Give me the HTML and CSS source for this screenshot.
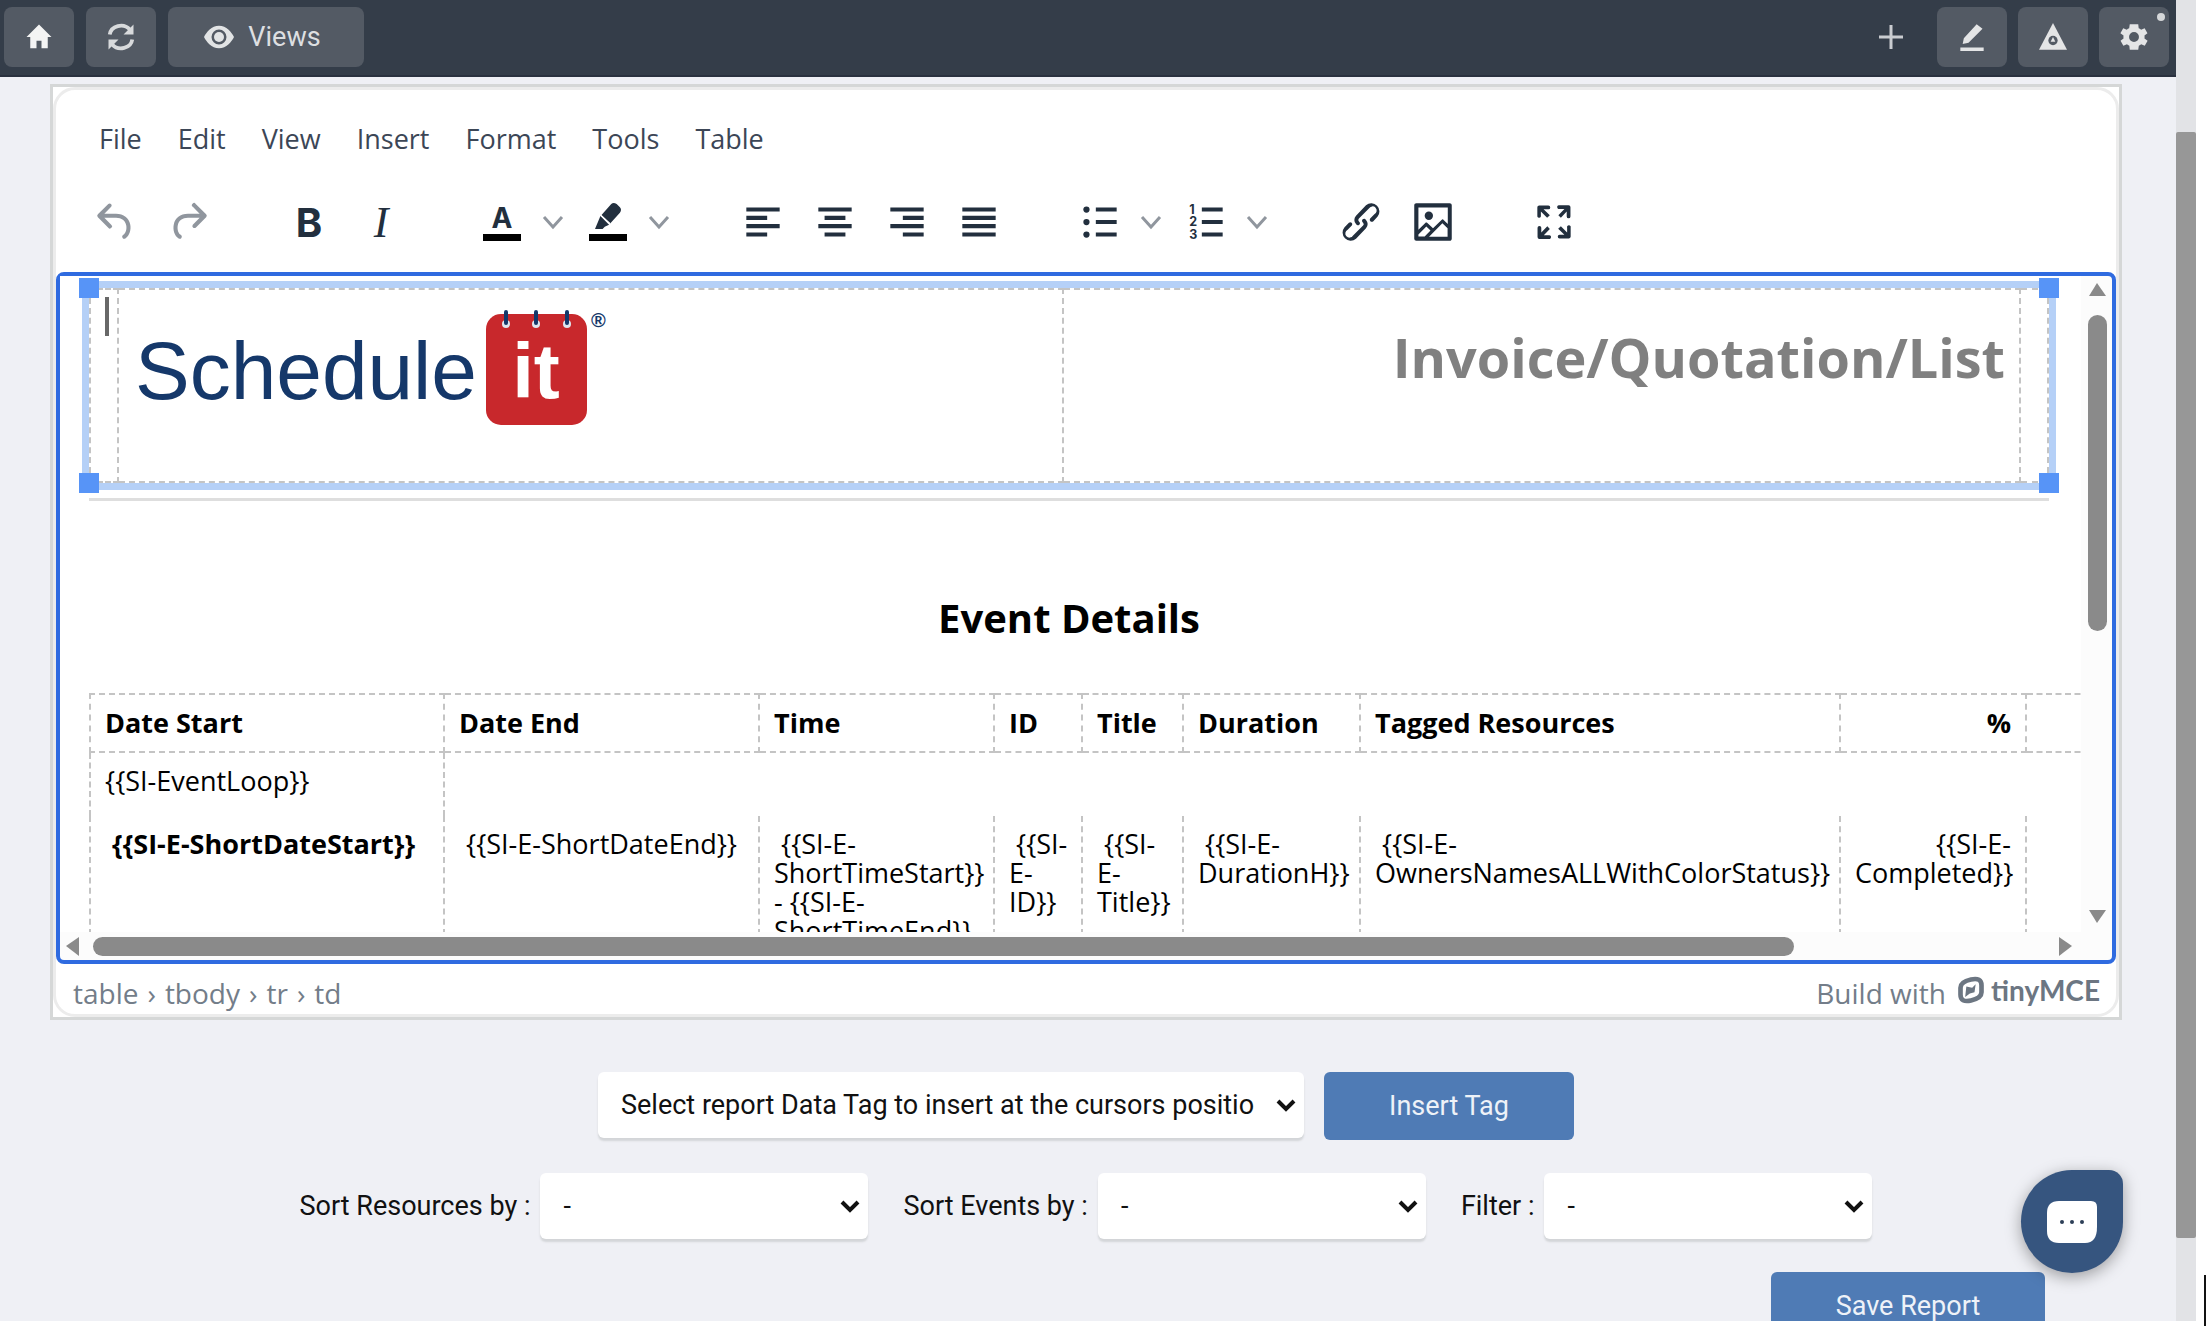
FILE: index.html
```html
<!DOCTYPE html>
<html lang="en">

<head>
    <meta charset="UTF-8">
    <meta name="viewport" content="width=device-width, initial-scale=1.0">
    <title>Report Editor</title>
    <link rel="stylesheet" href="styles.css">
</head>

<body>
    <div class="app">
        <header class="topbar">
            <button type="button" class="top-btn" aria-label="Home">
                <svg width="30" height="30" viewBox="0 0 24 24" fill="#f4f4f4"><path d="M12 2 2 12h3v9h5v-6h4v6h5v-9h3z"/></svg>
            </button>
            <button type="button" class="top-btn" aria-label="Refresh">
                <svg width="30" height="30" viewBox="0 0 24 24" fill="none" stroke="#d8dadc" stroke-width="3"><path d="M3 10a9 8 0 0 1 16-4M21 14a9 8 0 0 1-16 4"/><path d="M22 2v8h-8zM2 22v-8h8z" fill="#d8dadc" stroke="none"/></svg>
            </button>
            <button type="button" class="top-btn views-btn">
                <svg width="30" height="30" viewBox="0 0 24 24" fill="#e2e4e5"><path d="M12 3C6 3 2 8 0 12c2 4 6 9 12 9s10-5 12-9c-2-4-6-9-12-9zm0 15a6 6 0 1 1 0-12 6 6 0 0 1 0 12z"/><circle cx="12" cy="12" r="4"/></svg>
                Views
            </button>
            <div class="topbar-right">
                <button type="button" class="plus-btn" aria-label="Add">
                    <svg width="24" height="24" viewBox="0 0 24 24" stroke="#c9ccd0" stroke-width="3"><path d="M12 0v24M0 12h24"/></svg>
                </button>
                <button type="button" class="top-btn" aria-label="Edit">
                    <svg width="28" height="28" viewBox="0 0 24 24" fill="#e4e5e6"><path d="M2 21h20v3H2zM4 18l1-5L16 1l5 4L9 17z"/></svg>
                </button>
                <button type="button" class="top-btn" aria-label="Alerts">
                    <svg width="28" height="28" viewBox="0 0 24 24" fill="#e4e5e6"><path d="M12 0 24 23H0z"/><circle cx="12" cy="15" r="4" fill="#535a64"/><path d="m12 12 2 4h-4z"/></svg>
                </button>
                <button type="button" class="top-btn" aria-label="Settings">
                    <svg width="34" height="34" viewBox="0 0 24 24" fill="#e4e5e6"><path d="M19.4 13a7 7 0 0 0 0-2l2.100-1.600-2-3.500-2.500 1a7 7 0 0 0-1.700-1L15 3h-6l-.4 2.900a7 7 0 0 0-1.700 1l-2.500-1-2 3.500L4.600 11a7 7 0 0 0 0 2l-2.100 1.600 2 3.500 2.500-1a7 7 0 0 0 1.700 1L9 21h6l.4-2.900a7 7 0 0 0 1.700-1l2.500 1 2-3.500zM12 15.500a3.500 3.500 0 1 1 0-7 3.500 3.500 0 0 1 0 7z"/></svg>
                    <span class="dot"></span>
                </button>
            </div>
        </header>

        <main>
            <div class="editor-frame">
                <div class="editor">
                    <nav class="menubar">
                        <button type="button">File</button>
                        <button type="button">Edit</button>
                        <button type="button">View</button>
                        <button type="button">Insert</button>
                        <button type="button">Format</button>
                        <button type="button">Tools</button>
                        <button type="button">Table</button>
                    </nav>

                    <div class="toolbar">
                        <div class="group muted">
                            <button type="button" aria-label="Undo"><svg viewBox="0 0 24 24"><path d="M6.400 8H12c3.700 0 6.200 2 6.800 5.100.6 2.700-.4 5.600-2.300 6.800a1 1 0 0 1-1-1.800c1.100-.6 1.800-2.700 1.400-4.600-.5-2.100-2.100-3.500-4.900-3.500H6.400l3.300 3.300a1 1 0 1 1-1.400 1.400l-5-5a1 1 0 0 1 0-1.400l5-5a1 1 0 0 1 1.400 1.400z"/></svg></button>
                            <button type="button" aria-label="Redo"><svg viewBox="0 0 24 24"><path d="M17.600 10H12c-2.800 0-4.400 1.400-4.900 3.500-.4 2 .3 4 1.400 4.600a1 1 0 1 1-1 1.800c-2-1.200-2.900-4.100-2.300-6.800.6-3 3-5.100 6.800-5.100h5.600l-3.300-3.300a1 1 0 1 1 1.400-1.400l5 5a1 1 0 0 1 0 1.400l-5 5a1 1 0 0 1-1.400-1.400z"/></svg></button>
                        </div>
                        <div class="group">
                            <button type="button" class="bold" aria-label="Bold">B</button>
                            <button type="button" class="italic" aria-label="Italic">I</button>
                        </div>
                        <div class="group">
                            <button type="button" class="color-btn" aria-label="Text color"><span class="letter">A</span><span class="swatch"></span></button>
                            <button type="button" class="chevron" aria-label="Text color options"><svg viewBox="0 0 24 24"><path d="m3 7 9 10 9-10"/></svg></button>
                            <button type="button" class="color-btn" aria-label="Highlight color">
                                <svg class="marker" viewBox="0 0 24 24"><path d="M0 24 5 12l8 8-4 2-2 2zM6 11 15 1q2-2 5 0l3 3q2 2 0 5l-9 10z"/><path d="m5 11 9 8" stroke="#fff"/></svg>
                                <span class="swatch"></span>
                            </button>
                            <button type="button" class="chevron" aria-label="Highlight color options"><svg viewBox="0 0 24 24"><path d="m3 7 9 10 9-10"/></svg></button>
                        </div>
                        <div class="group">
                            <button type="button" aria-label="Align left"><svg viewBox="0 0 24 24"><path d="M4 5h16v2H4zM4 9h10v2H4zM4 13h16v2H4zM4 17h10v2H4z"/></svg></button>
                            <button type="button" aria-label="Align center"><svg viewBox="0 0 24 24"><path d="M4 5h16v2H4zM7 9h10v2H7zM4 13h16v2H4zM7 17h10v2H7z"/></svg></button>
                            <button type="button" aria-label="Align right"><svg viewBox="0 0 24 24"><path d="M4 5h16v2H4zM10 9h10v2H10zM4 13h16v2H4zM10 17h10v2H10z"/></svg></button>
                            <button type="button" aria-label="Justify"><svg viewBox="0 0 24 24"><path d="M4 5h16v2H4zM4 9h16v2H4zM4 13h16v2H4zM4 17h16v2H4z"/></svg></button>
                        </div>
                        <div class="group">
                            <button type="button" aria-label="Bullet list"><svg viewBox="0 0 24 24"><path d="M10 5h10v2H10zM10 11h10v2H10zM10 17h10v2H10z"/><circle cx="5.500" cy="6" r="1.500"/><circle cx="5.500" cy="12" r="1.500"/><circle cx="5.500" cy="18" r="1.500"/></svg></button>
                            <button type="button" class="chevron" aria-label="Bullet list options"><svg viewBox="0 0 24 24"><path d="m3 7 9 10 9-10"/></svg></button>
                            <button type="button" aria-label="Numbered list"><svg viewBox="0 0 24 24"><path d="M10 5h10v2H10zM10 11h10v2H10zM10 17h10v2H10z"/><text x="4" y="8" class="num">1</text><text x="4" y="14" class="num">2</text><text x="4" y="20" class="num">3</text></svg></button>
                            <button type="button" class="chevron" aria-label="Numbered list options"><svg viewBox="0 0 24 24"><path d="m3 7 9 10 9-10"/></svg></button>
                        </div>
                        <div class="group">
                            <button type="button" aria-label="Link"><svg viewBox="0 0 24 24"><path d="M6.200 12.300a1 1 0 0 1 1.400 1.400l-2 2a2 2 0 1 0 2.600 2.800l4.800-4.800a1 1 0 0 0 0-1.400 1 1 0 1 1 1.400-1.300 2.900 2.900 0 0 1 0 4L9.600 20a3.900 3.900 0 0 1-5.500-5.500zm11.600-.6a1 1 0 0 1-1.400-1.400l2-2a2 2 0 1 0-2.600-2.800L11 10.300a1 1 0 0 0 0 1.400A1 1 0 1 1 9.600 13a2.900 2.900 0 0 1 0-4L14.400 4a3.900 3.900 0 0 1 5.500 5.500z"/></svg></button>
                            <button type="button" aria-label="Image"><svg viewBox="0 0 24 24" fill-rule="evenodd"><path d="m5 15.700 3.300-3.200c.3-.3.7-.3 1 0L12 15l4.100-4c.3-.4.8-.4 1 0l2 1.900V5H5zM5 18v1h3l2.800-2.900-2-2zm14-3-2.500-2.400-6.400 6.500H19zM4 3h16c.6 0 1 .4 1 1v16c0 .6-.4 1-1 1H4a1 1 0 0 1-1-1V4c0-.6.4-1 1-1z"/><circle cx="10" cy="9" r="2"/></svg></button>
                        </div>
                        <div class="group">
                            <button type="button" aria-label="Fullscreen"><svg viewBox="0 0 24 24"><path d="m15.300 10-1.200-1.300 2.900-3h-2.300a.9.9 0 1 1 0-1.700H19c.5 0 .9.4.9.9v4.400a.9.9 0 1 1-1.800 0V7zm0 4 3 3v-2.300a.9.9 0 1 1 1.700 0V19c0 .5-.4.9-.9.9h-4.400a.9.9 0 1 1 0-1.800H17l-3-2.900zM10 15.400l-2.900 3h2.300a.9.9 0 1 1 0 1.700H5a.9.9 0 0 1-.9-.9v-4.400a.9.9 0 1 1 1.800 0V17l2.900-3zM8.700 10 5.700 7v2.300a.9.9 0 0 1-1.700 0V5c0-.5.4-.9.9-.9h4.400a.9.9 0 0 1 0 1.800H7l3 2.900z"/></svg></button>
                        </div>
                    </div>

                    <div class="edit-area">
                        <div class="document">
                            <div class="selected">
                                <table class="heading-table">
                                    <tr>
                                        <td class="side-cell"><span class="caret"></span></td>
                                        <td class="logo-cell">
                                            <svg class="logo" width="480" height="122" viewBox="0 0 480 122" role="img" aria-label="Schedule it">
                                                <text x="0" y="92" class="logo-name">Schedule</text>
                                                <rect x="351" y="7" width="101" height="111" rx="15" fill="#c8282c"/>
                                                <g fill="#dfe6ef"><circle cx="371" cy="17" r="4"/><circle cx="401" cy="17" r="4"/><circle cx="432" cy="17" r="4"/></g>
                                                <g stroke="#15386a" stroke-width="4" stroke-linecap="round"><path d="M371 5v11M401 5v11M432 5v11"/></g>
                                                <text x="401" y="91" text-anchor="middle" class="logo-it">it</text>
                                                <text x="456" y="20" class="logo-reg">®</text>
                                            </svg>
                                        </td>
                                        <td class="title-cell">Invoice/Quotation/List</td>
                                        <td class="side-cell"></td>
                                    </tr>
                                </table>
                                <span class="handle nw"></span>
                                <span class="handle ne"></span>
                                <span class="handle sw"></span>
                                <span class="handle se"></span>
                            </div>
                            <hr>
                            <h2>Event Details</h2>
                            <table class="events">
                                <colgroup>
                                    <col class="c-start"><col class="c-end"><col class="c-time"><col class="c-id"><col class="c-title"><col class="c-dur"><col class="c-res"><col class="c-pct"><col>
                                </colgroup>
                                <thead>
                                    <tr>
                                        <th>Date Start</th>
                                        <th>Date End</th>
                                        <th>Time</th>
                                        <th>ID</th>
                                        <th>Title</th>
                                        <th>Duration</th>
                                        <th>Tagged Resources</th>
                                        <th class="right">%</th>
                                        <th></th>
                                    </tr>
                                </thead>
                                <tbody>
                                    <tr class="loop">
                                        <td>{{SI-EventLoop}}</td>
                                        <td colspan="8"></td>
                                    </tr>
                                    <tr class="fields">
                                        <td><b>&nbsp;{{SI-E-ShortDateStart}}</b></td>
                                        <td>&nbsp;{{SI-E-ShortDateEnd}}</td>
                                        <td>&nbsp;{{SI-E-<br>ShortTimeStart}}<br>- {{SI-E-<br>ShortTimeEnd}}</td>
                                        <td>&nbsp;{{SI-<br>E-<br>ID}}</td>
                                        <td>&nbsp;{{SI-<br>E-<br>Title}}</td>
                                        <td>&nbsp;{{SI-E-<br>DurationH}}</td>
                                        <td>&nbsp;{{SI-E-<br>OwnersNamesALLWithColorStatus}}</td>
                                        <td class="right">{{SI-E-<br>Completed}}</td>
                                        <td></td>
                                    </tr>
                                </tbody>
                            </table>
                        </div>
                        <div class="scroll-v">
                            <svg width="19" height="15" viewBox="0 0 19 15"><path d="M9 1 18 14H1z"/></svg>
                            <div class="thumb"></div>
                            <svg class="last" width="19" height="15" viewBox="0 0 19 15"><path d="M9 14 18 1H1z"/></svg>
                        </div>
                        <div class="scroll-h">
                            <svg width="15" height="19" viewBox="0 0 15 19"><path d="M1 9 14 0v19z"/></svg>
                            <div class="thumb"></div>
                            <svg class="last" width="15" height="19" viewBox="0 0 15 19"><path d="M14 9 1 0v19z"/></svg>
                        </div>
                    </div>

                    <div class="statusbar">
                        <div class="path">
                            <span>table</span><span>›</span><span>tbody</span><span>›</span><span>tr</span><span>›</span><span>td</span>
                        </div>
                        <a href="#" class="branding">Build with
                            <svg width="28" height="28" viewBox="0 0 24 24"><path fill="none" stroke="#6c7682" stroke-width="4" d="M12 3q9-2 9 5v6q0 5-9 7-9 2-9-5v-6q0-5 9-7z"/><path fill="#6c7682" d="m8 9 5 1 3-3-1 7-4 1-4 3z"/></svg>
                            <strong>tinyMCE</strong>
                        </a>
                    </div>
                </div>
            </div>

            <form class="report-form">
                <div class="row">
                    <span class="select tag-select">
                        <select aria-label="Report Data Tag"><option>Select report Data Tag to insert at the cursors position</option></select>
                        <svg width="20" height="14" viewBox="0 0 20 14"><path d="m2 2 8 8 8-8"/></svg>
                    </span>
                    <button type="button" class="primary insert">Insert Tag</button>
                </div>
                <div class="row sort-row">
                    <div class="field">
                        <label for="sortResources">Sort Resources by :</label>
                        <span class="select"><select id="sortResources"><option>-</option></select><svg width="20" height="14" viewBox="0 0 20 14"><path d="m2 2 8 8 8-8"/></svg></span>
                    </div>
                    <div class="field">
                        <label for="sortEvents">Sort Events by :</label>
                        <span class="select"><select id="sortEvents"><option>-</option></select><svg width="20" height="14" viewBox="0 0 20 14"><path d="m2 2 8 8 8-8"/></svg></span>
                    </div>
                    <div class="field">
                        <label for="filter">Filter :</label>
                        <span class="select"><select id="filter"><option>-</option></select><svg width="20" height="14" viewBox="0 0 20 14"><path d="m2 2 8 8 8-8"/></svg></span>
                    </div>
                </div>
                <div class="save-row">
                    <button type="submit" class="primary save">Save Report</button>
                </div>
            </form>
        </main>

        <button type="button" class="chat" aria-label="Chat">
            <svg width="50" height="42" viewBox="0 0 50 42"><path fill="#fff" d="M12 0h32q6 0 6 6v20q0 16-12 16H12Q0 42 0 30V12Q0 0 12 0z"/><g fill="#2d3f57"><circle cx="15" cy="21" r="2"/><circle cx="25" cy="21" r="2"/><circle cx="35" cy="21" r="2"/></g></svg>
        </button>
    </div>
    <div class="page-scroll"><div class="page-thumb"></div></div>
    <div class="edge"></div>
</body>

</html>
```

FILE: styles.css
```css
* {
    box-sizing: border-box;
}

body {
    margin: 0;
    height: 100vh;
    padding-bottom: 5px;
    display: flex;
    overflow: hidden;
    background-color: #ffffff;
    font-family: Roboto, Arial, sans-serif;
    font-size: 27px;
    color: #111111;
}

button {
    font: inherit;
    color: inherit;
    border: none;
    background: none;
    padding: 0;
    cursor: pointer;
}

.app {
    position: relative;
    flex: 1;
    min-width: 0;
    overflow: hidden;
    background-color: #eff0f5;
}

/* top bar */
.topbar {
    display: flex;
    align-items: center;
    gap: 12px;
    height: 77px;
    padding: 0 7px 2px 4px;
    background-color: #343d49;
    border-bottom: 2px solid #2a313f;
}

.top-btn {
    position: relative;
    display: flex;
    align-items: center;
    justify-content: center;
    width: 70px;
    height: 60px;
    border-radius: 8px;
    background-color: #535a64;
    color: #dddfe1;
}

.views-btn {
    width: 196px;
    padding-right: 7px;
    gap: 14px;
}

.topbar-right {
    display: flex;
    align-items: center;
    gap: 11px;
    margin-left: auto;
}

.plus-btn {
    display: flex;
    margin-right: 23px;
}

.dot {
    position: absolute;
    top: 6px;
    right: 4px;
    width: 8px;
    height: 8px;
    border-radius: 50%;
    background-color: #d5d7d9;
}

/* editor */
.editor-frame {
    margin: 7px 54px 0 50px;
    border: 3px solid #d5d7d7;
    background-color: #ffffff;
}

.editor {
    border: 3px solid #ececec;
    border-radius: 22px;
    font-family: "Open Sans", "Noto Sans", sans-serif;
}

.menubar {
    display: flex;
    align-items: center;
    gap: 36px;
    height: 96px;
    padding-left: 43px;
    color: #3c4656;
}

.toolbar {
    display: flex;
    gap: 49px;
    height: 86px;
    padding: 0 24px 14px;
    color: #222f3e;
}

.group {
    display: flex;
}

.group button {
    display: flex;
    align-items: center;
    justify-content: center;
    width: 72px;
}

.group svg {
    width: 50px;
    height: 50px;
    fill: #222f3e;
}

.muted svg {
    fill: #90969e;
}

.group .chevron {
    width: 34px;
    padding-right: 4px;
}

.chevron svg {
    width: 24px;
    height: 24px;
    fill: none;
    stroke: #90969e;
    stroke-width: 3;
}

.bold {
    font-family: Inter, sans-serif;
    font-size: 40px;
    font-weight: 700;
}

.italic {
    font-family: "Liberation Serif", serif;
    font-size: 44px;
    font-style: italic;
}

.group .color-btn {
    flex-direction: column;
}

.letter {
    font-family: Inter, sans-serif;
    font-size: 28px;
    font-weight: 700;
    line-height: 31px;
}

.group .marker {
    width: 30px;
    height: 26px;
    margin-bottom: 5px;
}

.swatch {
    width: 38px;
    height: 7px;
    background-color: #000000;
}

.num {
    font-family: Inter, sans-serif;
    font-size: 6px;
    font-weight: 700;
}

.edit-area {
    display: grid;
    grid-template-columns: 1fr 31px;
    grid-template-rows: 1fr 28px;
    height: 692px;
    border: 4px solid #2f6be0;
    border-radius: 8px;
    background-color: #fcfcfc;
}

.document {
    min-width: 0;
    overflow: hidden;
    padding: 12px 32px 0 29px;
    background-color: #ffffff;
    color: #000000;
}

.selected {
    position: relative;
    box-shadow: 0 0 0 7px #b5d0f7;
}

table {
    border-collapse: collapse;
    table-layout: fixed;
}

td,
th {
    border: 2px dashed #c4c4c4;
    text-align: left;
    vertical-align: top;
}

.heading-table {
    width: 100%;
    height: 195px;
    background-color: #ffffff;
}

.heading-table td {
    padding: 17px 14px 0 16px;
}

.heading-table .side-cell {
    width: 28px;
    padding: 7px 0 0 14px;
}

.heading-table .logo-cell {
    width: 945px;
}

.caret {
    display: block;
    width: 4px;
    height: 39px;
    background-color: #686868;
}

.logo {
    display: block;
}

.logo-name {
    font-family: "Liberation Sans", Arial, sans-serif;
    font-size: 82px;
    fill: #15386a;
}

.logo-it {
    font-family: "Liberation Sans", Arial, sans-serif;
    font-size: 78px;
    font-weight: 700;
    fill: #ffffff;
}

.logo-reg {
    font-family: "Liberation Sans", Arial, sans-serif;
    font-size: 20px;
    font-weight: 700;
    fill: #15386a;
}

.heading-table .title-cell {
    padding-top: 30px;
    text-align: right;
    font-size: 54px;
    font-weight: 700;
    color: #808080;
}

.handle {
    position: absolute;
    width: 20px;
    height: 20px;
    background-color: #5794f7;
}

.nw { top: -10px; left: -10px; }
.ne { top: -10px; right: -10px; }
.sw { bottom: -10px; left: -10px; }
.se { bottom: -10px; right: -10px; }

hr {
    height: 3px;
    margin: 15px 0 0;
    border: none;
    background-color: #dedede;
}

h2 {
    margin: 89px 0 47px;
    font-size: 40px;
    line-height: 56px;
    text-align: center;
}

.events {
    width: calc(100% + 60px);
    line-height: 29px;
}

.events td,
.events th {
    padding: 13px 0 14px 14px;
    white-space: nowrap;
}

.events .right {
    padding-right: 14px;
    text-align: right;
}

.events tbody td {
    border-top: none;
    border-bottom: none;
}

.events .loop td {
    padding-bottom: 21px;
}

.events .fields td {
    height: 160px;
}

.c-start { width: 354px; }
.c-end { width: 315px; }
.c-time { width: 235px; }
.c-id { width: 88px; }
.c-title { width: 101px; }
.c-dur { width: 177px; }
.c-res { width: 480px; }
.c-pct { width: 186px; }

.scroll-v,
.scroll-h {
    display: flex;
    align-items: center;
    fill: #8a8a8a;
}

.scroll-v {
    flex-direction: column;
    padding: 6px 0 8px 2px;
}

.scroll-h {
    padding: 0 8px 0 5px;
}

.thumb {
    border-radius: 10px;
    background-color: #8a8a8a;
}

.scroll-v .thumb {
    width: 19px;
    height: calc(50% - 5px);
    margin-top: 18px;
}

.scroll-h .thumb {
    width: calc(85% - 6px);
    height: 19px;
    margin-left: 13px;
}

.scroll-v .last {
    margin-top: auto;
}

.scroll-h .last {
    margin-left: auto;
}

.statusbar {
    display: flex;
    justify-content: space-between;
    align-items: center;
    height: 50px;
    padding: 8px 16px 0 17px;
    font-size: 28px;
    color: #737d89;
}

.path {
    display: flex;
    gap: 9px;
}

.branding {
    display: flex;
    align-items: center;
    color: inherit;
    text-decoration: none;
}

.branding svg {
    margin: 0 6px 6px 11px;
}

.branding strong {
    margin-bottom: 6px;
    font-family: Lato, sans-serif;
    color: #6c7682;
}

/* report options */
.row {
    display: flex;
    justify-content: center;
    gap: 20px;
    margin-top: 52px;
    padding-right: 4px;
}

.sort-row {
    gap: 35px;
    margin-top: 33px;
    padding-right: 4px;
}

.field {
    display: flex;
    align-items: center;
    gap: 10px;
}

.select {
    position: relative;
    width: 328px;
}

.tag-select {
    width: 706px;
}

.select select {
    display: block;
    width: 100%;
    height: 66px;
    padding: 0 50px 0 23px;
    border: none;
    border-radius: 6px;
    box-shadow: 0 3px 2px #d3d5d8;
    appearance: none;
    background-color: #ffffff;
    color: #111111;
    font: inherit;
}

.select svg {
    position: absolute;
    top: 27px;
    right: 8px;
    fill: none;
    stroke: #111111;
    stroke-width: 4;
    pointer-events: none;
}

.primary {
    height: 68px;
    border-radius: 6px;
    background-color: #4f7bb5;
    color: #eef2f8;
}

.insert {
    width: 250px;
}

.save-row {
    display: flex;
    justify-content: flex-end;
    margin: 33px 131px 0 0;
}

.save {
    width: 274px;
}

.chat {
    position: absolute;
    right: 53px;
    bottom: 48px;
    display: flex;
    align-items: center;
    justify-content: center;
    width: 102px;
    height: 103px;
    border-radius: 50% 14px 50% 50%;
    background-color: #36557f;
    box-shadow: 0 4px 16px rgba(0, 0, 0, 0.35);
}

/* page scrollbar */
.page-scroll {
    width: 20px;
    padding-top: 132px;
    background-color: #e2e3e6;
}

.page-thumb {
    height: 93%;
    border-radius: 2px;
    background-color: #979797;
}

.edge {
    width: 10px;
    height: 51px;
    margin-bottom: -5px;
    align-self: flex-end;
    border-right: 2px solid #111111;
}
```
